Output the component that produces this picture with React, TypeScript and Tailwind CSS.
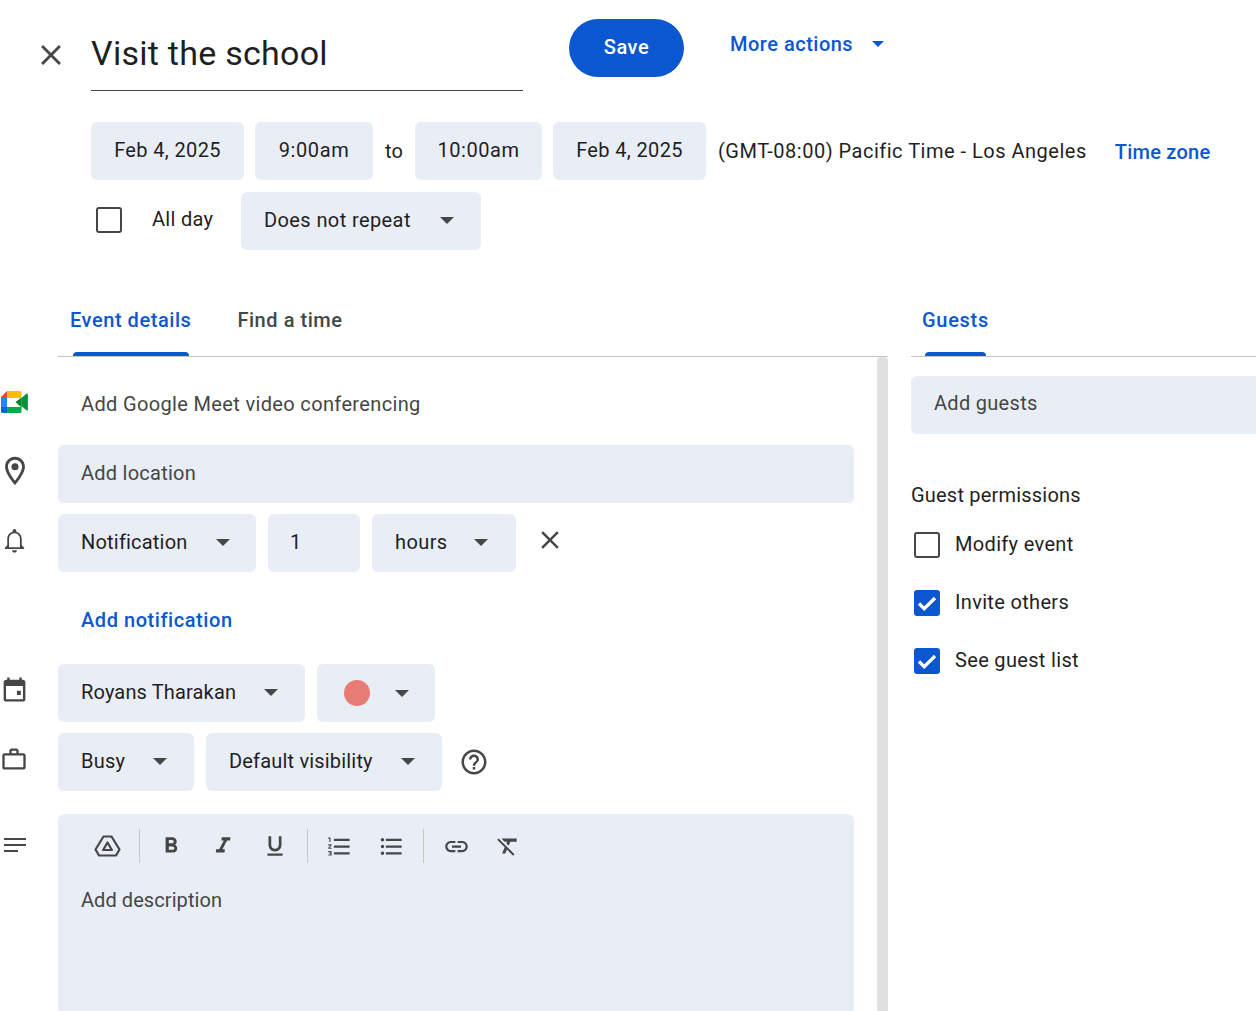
import type { ReactNode } from "react";

const sans = "font-['Roboto',sans-serif]";

const paths = {
  close:
    "M19 6.41L17.59 5 12 10.59 6.41 5 5 6.41 10.59 12 5 17.59 6.41 19 12 13.41 17.59 19 19 17.59 13.41 12z",
  bell: "M12 22c1.1 0 2-.9 2-2h-4c0 1.1.9 2 2 2zm6-6v-5c0-3.07-1.63-5.64-4.5-6.32V4c0-.83-.67-1.5-1.5-1.5s-1.5.67-1.5 1.5v.68C7.64 5.36 6 7.92 6 11v5l-2 2v1h16v-1l-2-2zm-1.5 1.500h-9V11c0-2.48 1.51-5 4.500-5s4.500 2.520 4.500 5v6.500z",
  pin: "M12 2C8.13 2 5 5.13 5 9c0 5.25 7 13 7 13s7-7.75 7-13c0-3.87-3.13-7-7-7zM7 9c0-2.76 2.24-5 5-5s5 2.24 5 5c0 2.88-2.88 7.19-5 9.88C9.92 16.21 7 11.85 7 9z M12 6.5a2.5 2.5 0 1 0 0 5 2.5 2.5 0 0 0 0-5z",
  calendar:
    "M19 4h-1V2h-2v2H8V2H6v2H5c-1.1 0-2 .9-2 2v14c0 1.1.9 2 2 2h14c1.1 0 2-.9 2-2V6c0-1.1-.9-2-2-2zm0 16H5V9h14v11zM14 13h3.200v3.500H14z",
  briefcase:
    "M20 7h-4V5c0-1.1-.9-2-2-2h-4c-1.1 0-2 .9-2 2v2H4c-1.1 0-2 .9-2 2v10c0 1.1.9 2 2 2h16c1.1 0 2-.9 2-2V9c0-1.1-.9-2-2-2zM10 5h4v2h-4V5zm10 14H4V9h16v10z",
  help: "M11 18h2v-2h-2v2zm1-16C6.48 2 2 6.48 2 12s4.48 10 10 10 10-4.48 10-10S17.52 2 12 2zm0 18c-4.41 0-8-3.59-8-8s3.59-8 8-8 8 3.59 8 8-3.59 8-8 8zm0-14c-2.21 0-4 1.79-4 4h2c0-1.1.9-2 2-2s2 .9 2 2c0 2-3 1.75-3 5h2c0-2.25 3-2.5 3-5 0-2.21-1.79-4-4-4z",
  bold: "M15.6 10.79c.97-.67 1.65-1.77 1.65-2.79 0-2.26-1.75-4-4-4H7v14h7.04c2.09 0 3.71-1.7 3.71-3.79 0-1.52-.86-2.82-2.15-3.42zM10 6.5h3c.83 0 1.5.67 1.5 1.5s-.67 1.5-1.5 1.5h-3v-3zm3.5 9H10v-3h3.5c.83 0 1.5.67 1.5 1.5s-.67 1.5-1.5 1.5z",
  italic: "M10 4v3h2.21l-3.42 8H6v3h8v-3h-2.21l3.42-8H18V4z",
  underline:
    "M12 17c3.31 0 6-2.69 6-6V3h-2.5v8c0 1.93-1.57 3.5-3.5 3.5S8.5 12.93 8.5 11V3H6v8c0 3.31 2.69 6 6 6zm-7 2v2h14v-2H5z",
  numbered:
    "M2 17h2v.5H3v1h1v.5H2v1h3v-4H2v1zm1-9h1V4H2v1h1v3zm-1 3h1.8L2 13.1v.9h3v-1H3.2L5 10.9V10H2v1zm5-6v2h14V5H7zm0 14h14v-2H7v2zm0-6h14v-2H7v2z",
  bulleted:
    "M4 10.5c-.83 0-1.5.67-1.5 1.5s.67 1.5 1.5 1.5 1.5-.67 1.5-1.5-.67-1.5-1.5-1.5zm0-6c-.83 0-1.5.67-1.5 1.5S3.17 7.5 4 7.5 5.5 6.83 5.5 6 4.83 4.5 4 4.5zm0 12c-.83 0-1.5.68-1.5 1.5s.68 1.5 1.5 1.5 1.5-.68 1.5-1.5-.67-1.5-1.5-1.5zM7 19h14v-2H7v2zm0-6h14v-2H7v2zm0-8v2h14V5H7z",
  link: "M3.9 12c0-1.71 1.39-3.1 3.1-3.1h4V7H7c-2.76 0-5 2.24-5 5s2.24 5 5 5h4v-1.9H7c-1.71 0-3.1-1.39-3.1-3.1zM8 13h8v-2H8v2zm9-6h-4v1.9h4c1.71 0 3.1 1.39 3.1 3.1s-1.39 3.1-3.1 3.1h-4V17h4c2.76 0 5-2.24 5-5s-2.24-5-5-5z",
  clear:
    "M3.27 5L2 6.27l6.97 6.97L6.5 19h3l1.57-3.66L16.73 21 18 19.73 3.55 5.27 3.27 5zM6 5v.18L8.82 8h2.4l-.72 1.68 2.1 2.1L14.21 8H20V5H6z",
  lines: "M3.200 6.400h17.600v1.600H3.200zM3.200 11.200h17.600v1.600H3.200zM3.200 16h11.200v1.600H3.200z",
};

function Icon({ d, className }: { d: string; className: string }) {
  return (
    <svg viewBox="0 0 24 24" fill="currentColor" className={`shrink-0 ${className}`}>
      <path d={d} />
    </svg>
  );
}

function Caret({ className = "" }: { className?: string }) {
  return <span className={`h-0 w-0 border-x-[7px] border-t-[7px] border-x-transparent border-t-[#444746] ${className}`} />;
}

function Field({ children, className = "" }: { children: ReactNode; className?: string }) {
  return (
    <div className={`flex h-[58px] shrink-0 items-center rounded-md bg-[#e9edf6] pb-[2px] text-[20px] text-[#1f1f1f] ${className}`}>
      {children}
    </div>
  );
}

function Row({ icon, children, className = "" }: { icon?: ReactNode; children: ReactNode; className?: string }) {
  return (
    <div className={`flex items-center ${className}`}>
      <div className="flex w-[58px] shrink-0 items-center">{icon}</div>
      {children}
    </div>
  );
}

function Box({ checked = false, className = "" }: { checked?: boolean; className?: string }) {
  if (checked) {
    return (
      <span className={`flex h-[26px] w-[26px] shrink-0 items-center justify-center rounded-[3px] bg-[#0b57d0] ${className}`}>
        <svg viewBox="0 0 24 24" className="h-[24px] w-[24px] text-white" fill="none" stroke="currentColor" strokeWidth="3.2">
          <path d="M4 12.500l5.200 5.200L20 7" />
        </svg>
      </span>
    );
  }
  return <span className={`block h-[26px] w-[26px] shrink-0 rounded-[3px] border-2 border-[#444746] ${className}`} />;
}

function MeetLogo() {
  return (
    <svg viewBox="0 0 27 22" className="-mt-[4px] ml-[1px] h-[22px] w-[27px]">
      <path d="M6 0h13a1.500 1.500 0 0 1 1.500 1.500V7H6z" fill="#fbbc04" />
      <path d="M6 0v6H0z" fill="#ea4335" />
      <path d="M0 6h6v10H0z" fill="#2684fc" />
      <path d="M0 16h6v6H1.500A1.500 1.500 0 0 1 0 20.500z" fill="#0066da" />
      <path d="M6 16h14.500v4.500A1.500 1.500 0 0 1 19 22H6z" fill="#00ac47" />
      <path d="M20.500 6.500v10L14.500 11z" fill="#00832d" />
      <path d="M20.500 7l5-4.200c.6-.4 1.300 0 1.300.7v15c0 .7-.8 1.100-1.300.7l-5-4.200z" fill="#00ac47" />
      <path d="M20.500 7l6.300-5v18l-6.300-4.700z" fill="#00832d" opacity="0.55" />
    </svg>
  );
}

function DriveIcon() {
  return (
    <svg viewBox="0 0 26 24" className="block h-6 w-[27px] text-[#444746]" fill="none" stroke="currentColor" strokeWidth="2.200" strokeLinejoin="round">
      <path d="M9 2.500h8L25 15.500l-3.500 6h-17L1 15.500z" />
      <path d="M13 8.500l4.400 7.500H8.600z" />
    </svg>
  );
}

function ToolDivider({ className = "" }: { className?: string }) {
  return <span className={`block h-[34px] w-px shrink-0 bg-[#c4c7c5] ${className}`} />;
}

export default function App() {
  return (
    <div className={`h-[1011px] w-[1256px] overflow-hidden bg-white ${sans}`}>
      <header className="flex h-[122px] items-start">
        <div className="ml-[34px] mt-[38px] w-[57px]">
          <Icon d={paths.close} className="h-[34px] w-[34px] text-[#444746]" />
        </div>
        <div className="mt-[13px] h-[78px] w-[432px] border-b border-[#444746] text-[34px] leading-[80px] tracking-[0.26px] text-[#1f1f1f]">
          Visit the school
        </div>
        <button className="ml-[46px] mt-[19px] h-[58px] w-[115px] rounded-full bg-[#0b57d0] pb-[2px] text-center text-[20px] font-medium tracking-[0.6px] text-white">
          Save
        </button>
        <div className="ml-[46px] mt-[29px] flex items-center text-[20px] font-medium tracking-[0.5px] text-[#0b57d0]">
          More actions
          <span className="ml-[19px] h-0 w-0 border-x-[6px] border-t-[6px] border-x-transparent border-t-[#0b57d0]" />
        </div>
      </header>

      <div className="flex items-center pl-[91px]">
        <Field className="w-[153px] justify-center tracking-[0.36px]">Feb 4, 2025</Field>
        <Field className="ml-[11px] w-[118px] justify-center tracking-[0.6px]">9:00am</Field>
        <span className="w-[42px] text-center text-[20px] text-[#1f1f1f]">to</span>
        <Field className="w-[127px] justify-center tracking-[0.55px]">10:00am</Field>
        <Field className="ml-[11px] w-[153px] justify-center tracking-[0.36px]">Feb 4, 2025</Field>
        <span className="ml-[12px] whitespace-nowrap text-[20px] tracking-[0.5px] text-[#1f1f1f]">(GMT-08:00) Pacific Time - Los Angeles</span>
        <span className="ml-[28px] mt-[2px] whitespace-nowrap text-[20px] font-medium tracking-[0.25px] text-[#0b57d0]">Time zone</span>
      </div>

      <div className="mt-[12px] flex items-center pl-[96px]">
        <Box className="-mt-[2px]" />
        <span className="ml-[30px] -mt-[4px] w-[89px] text-[20px] tracking-[0.3px] text-[#1f1f1f]">All day</span>
        <Field className="w-[240px] justify-between pl-[23px] pr-[27px] tracking-[0.4px]">
          Does not repeat
          <Caret />
        </Field>
      </div>

      <div className="mt-[40px] flex">
        <main className="w-[888px] shrink-0">
          <div className="ml-[58px] flex h-[67px] items-center border-b border-[#c4c7c5] text-[20px] font-medium tracking-[0.55px]">
            <div className="relative ml-[12px] flex h-full items-center pb-[6px] text-[#0b57d0]">
              Event details
              <span className="absolute bottom-0 left-[3px] h-[4px] w-[116px] rounded-t bg-[#0b57d0]" />
            </div>
            <div className="ml-[46px] pb-[6px] text-[#444746]">Find a time</div>
          </div>

          <div className="flex">
            <div className="w-[877px] shrink-0">
              <Row icon={<MeetLogo />} className="mt-[17px] h-[60px]">
                <span className="pl-[23px] text-[20px] tracking-[0.35px] text-[#444746]">Add Google Meet video conferencing</span>
              </Row>
              <Row icon={<Icon d={paths.pin} className="-ml-[2px] -mt-[6px] h-[34px] w-[34px] text-[#444746]" />} className="mt-[11px]">
                <Field className="w-[796px] pl-[23px] tracking-[0.25px] !text-[#444746]">Add location</Field>
              </Row>
              <Row icon={<Icon d={paths.bell} className="-mt-[5px] h-[29px] w-[29px] text-[#444746]" />} className="mt-[11px]">
                <Field className="w-[198px] justify-between pl-[23px] pr-[26px] tracking-[0.2px]">
                  Notification
                  <Caret />
                </Field>
                <Field className="ml-[12px] w-[92px] pl-[22px]">1</Field>
                <Field className="ml-[12px] w-[144px] justify-between pl-[23px] pr-[28px] tracking-[0.4px]">
                  hours
                  <Caret />
                </Field>
                <Icon d={paths.close} className="-mt-[6px] ml-[19px] h-[30px] w-[30px] text-[#444746]" />
              </Row>
              <Row className="mt-[18px] h-[60px]">
                <span className="pl-[23px] text-[20px] font-medium tracking-[0.56px] text-[#0b57d0]">Add notification</span>
              </Row>
              <Row icon={<Icon d={paths.calendar} className="-mt-[8px] h-[29px] w-[29px] text-[#444746]" />} className="mt-[14px]">
                <Field className="w-[247px] justify-between pl-[23px] pr-[27px] tracking-[0.15px]">
                  Royans Tharakan
                  <Caret />
                </Field>
                <Field className="ml-[12px] w-[118px] justify-between !pb-0 pl-[27px] pr-[26px]">
                  <span className="h-[26px] w-[26px] rounded-full bg-[#e67c73]" />
                  <Caret />
                </Field>
              </Row>
              <Row icon={<Icon d={paths.briefcase} className="-mt-[6px] h-[28px] w-[28px] text-[#444746]" />} className="mt-[11px]">
                <Field className="w-[136px] justify-between pl-[23px] pr-[27px] tracking-[0.25px]">
                  Busy
                  <Caret />
                </Field>
                <Field className="ml-[12px] w-[236px] justify-between pl-[23px] pr-[27px] tracking-[0.18px]">
                  Default visibility
                  <Caret />
                </Field>
                <Icon d={paths.help} className="-mt-[1px] ml-[17px] h-[30px] w-[30px] text-[#444746]" />
              </Row>
              <div className="mt-[23px] flex items-start">
                <div className="w-[58px] shrink-0 pt-[16px]">
                  <Icon d={paths.lines} className="h-[30px] w-[30px] text-[#444746]" />
                </div>
                <div className="h-[240px] w-[796px] rounded-md bg-[#e9edf6] pl-[23px] text-[#444746]">
                  <div className="flex h-[66px] items-center pb-[2px]">
                    <span className="ml-[13px]"><DriveIcon /></span>
                    <ToolDivider className="ml-[18px]" />
                    <Icon d={paths.bold} className="ml-[18px] h-[26px] w-[26px]" />
                    <Icon d={paths.italic} className="ml-[26px] h-[26px] w-[26px] -skew-x-6" />
                    <Icon d={paths.underline} className="ml-[26px] h-[26px] w-[26px]" />
                    <ToolDivider className="ml-[19px]" />
                    <Icon d={paths.numbered} className="ml-[18px] h-[27px] w-[27px]" />
                    <Icon d={paths.bulleted} className="ml-[25px] h-[27px] w-[27px]" />
                    <ToolDivider className="ml-[18px]" />
                    <Icon d={paths.link} className="ml-[19px] h-[27px] w-[27px]" />
                    <Icon d={paths.clear} className="ml-[25px] h-[26px] w-[26px]" />
                  </div>
                  <p className="mt-[5px] text-[20px] tracking-[0.07px]">Add description</p>
                </div>
              </div>
            </div>
            <div className="h-[700px] w-[11px] shrink-0 rounded-t-sm bg-[#e1e1e1]" />
          </div>
        </main>

        <aside className="ml-[23px] flex-1">
          <div className="flex h-[67px] items-center border-b border-[#c4c7c5] text-[20px] font-medium tracking-[0.7px] text-[#0b57d0]">
            <div className="relative ml-[11px] flex h-full items-center pb-[6px]">
              Guests
              <span className="absolute bottom-0 left-[3px] h-[4px] w-[61px] rounded-t bg-[#0b57d0]" />
            </div>
          </div>
          <Field className="mt-[19px] !w-full rounded-r-none pb-[4px] pl-[23px] tracking-[0.3px] !text-[#444746]">Add guests</Field>
          <p className="mt-[46px] text-[20px] tracking-[0.2px] text-[#1f1f1f]">Guest permissions</p>
          <div className="mt-[6px] flex h-[58px] items-center pl-[3px] text-[20px] tracking-[0.33px] text-[#1f1f1f]">
            <Box />
            <span className="ml-[15px] pb-[2px]">Modify event</span>
          </div>
          <div className="flex h-[58px] items-center pl-[3px] text-[20px] tracking-[0.33px] text-[#1f1f1f]">
            <Box checked />
            <span className="ml-[15px] pb-[2px]">Invite others</span>
          </div>
          <div className="flex h-[58px] items-center pl-[3px] text-[20px] tracking-[0.33px] text-[#1f1f1f]">
            <Box checked />
            <span className="ml-[15px] pb-[2px]">See guest list</span>
          </div>
        </aside>
      </div>
    </div>
  );
}
